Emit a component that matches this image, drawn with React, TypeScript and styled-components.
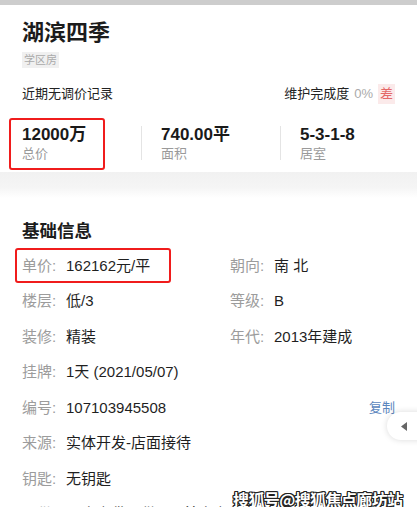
import React from 'react';
import styled, { createGlobalStyle } from 'styled-components';

const GlobalStyle = createGlobalStyle`
  html, body {
    margin: 0;
    padding: 0;
    background: #fff;
  }
  body {
    font-family: "Liberation Sans", "Noto Sans CJK SC", sans-serif;
    color: #222;
    overflow: hidden;
  }
`;

const Page = styled.div`
  position: relative;
  width: 417px;
  height: 507px;
  overflow: hidden;
  border-top: 5px solid #cdcdcd;
  box-sizing: border-box;
  background: #fff;
`;

const Header = styled.section`
  padding: 12px 22px 0 22px;
`;

const Title = styled.h1`
  margin: 0;
  font-size: 22px;
  line-height: 32px;
  font-weight: 700;
  color: #1c1c1c;
`;

const Tag = styled.span`
  display: inline-block;
  margin-top: 3px;
  padding: 0 2px;
  font-size: 11px;
  line-height: 16px;
  color: #aaa;
  background: #f0f0f0;
`;

const PriceLine = styled.div`
  display: flex;
  justify-content: space-between;
  align-items: center;
  margin-top: 16px;
  font-size: 13px;
  line-height: 20px;
  color: #222;
`;

const Completion = styled.div`
  display: flex;
  align-items: center;
  gap: 5px;
`;

const Percent = styled.span`
  color: #aaa;
`;

const Grade = styled.span`
  padding: 0 2px;
  color: #e46868;
  background: #fbeaea;
`;

const Stats = styled.div`
  display: grid;
  grid-template-columns: 119px 139px 1fr;
  margin-top: 20px;
  padding-bottom: 12px;
`;

const Stat = styled.div<{ $divider?: boolean; $boxed?: boolean }>`
  position: relative;
  padding-left: ${p => (p.$divider ? '19px' : '0')};
  border-left: ${p => (p.$divider ? '1px solid #e4e4e4' : 'none')};
  height: 34px;
  margin-top: 2px;
  &::after {
    content: '';
    display: ${p => (p.$boxed ? 'block' : 'none')};
    position: absolute;
    left: -13px;
    top: -8px;
    width: 92px;
    height: 48px;
    border: 2px solid #f01c1c;
    border-radius: 3px;
  }
`;

const StatValue = styled.div`
  font-size: 17px;
  line-height: 18px;
  font-weight: 700;
  color: #1a1a1a;
`;

const StatLabel = styled.div`
  margin-top: 1px;
  font-size: 13px;
  line-height: 18px;
  color: #9a9a9a;
`;

const Band = styled.div`
  height: 26px;
  background: linear-gradient(#f1f1f1, #f5f5f5 60%, #fff);
`;

const Info = styled.section`
  padding: 20px 22px 0 22px;
`;

const SectionTitle = styled.h2`
  margin: 0 0 4px 0;
  font-size: 17.5px;
  line-height: 26px;
  font-weight: 700;
  color: #1c1c1c;
`;

const Grid = styled.div`
  display: grid;
  grid-template-columns: 208px 1fr;
  grid-auto-rows: 35.5px;
  align-items: center;
`;

const Field = styled.div<{ $boxed?: boolean; $wide?: boolean }>`
  position: relative;
  display: flex;
  align-items: center;
  grid-column: ${p => (p.$wide ? '1 / -1' : 'auto')};
  font-size: 15px;
  line-height: 20px;
  white-space: nowrap;
  &::after {
    content: '';
    display: ${p => (p.$boxed ? 'block' : 'none')};
    position: absolute;
    left: -7px;
    top: -8px;
    width: 152px;
    height: 31px;
    border: 2px solid #f01c1c;
    border-radius: 3px;
  }
`;

const Label = styled.span`
  width: 44px;
  color: #9c9c9c;
`;

const Value = styled.span`
  color: #1f1f1f;
`;

const Copy = styled.span`
  margin-left: auto;
  font-size: 13px;
  color: #5b86bd;
`;

const Hint = styled.span`
  display: inline-block;
  width: 12px;
  height: 12px;
  margin: 0 8px 0 5px;
  border: 1px solid #bbb;
  border-radius: 50%;
`;

const SideTab = styled.div`
  position: absolute;
  right: -6px;
  top: 407px;
  width: 36px;
  height: 28px;
  border-radius: 14px 0 0 14px;
  background: #fff;
  box-shadow: 0 0 6px rgba(0, 0, 0, 0.15);
  display: flex;
  align-items: center;
  padding-left: 14px;
  box-sizing: border-box;
`;

const Watermark = styled.div`
  position: absolute;
  left: 233px;
  top: 482px;
  font-size: 16px;
  font-weight: 700;
  color: #fff;
  letter-spacing: -0.6px;
  font-family: "Noto Sans CJK SC", sans-serif;
  text-shadow:
    -1px -1px 0 #222, 1px -1px 0 #222, -1px 1px 0 #222, 1px 1px 0 #222,
    0 1px 0 #222, 0 -1px 0 #222, 1px 0 0 #222, -1px 0 0 #222;
`;

export default function App() {
  return (
    <Page>
      <GlobalStyle />
      <Header>
        <Title>湖滨四季</Title>
        <Tag>学区房</Tag>
        <PriceLine>
          <span>近期无调价记录</span>
          <Completion>
            <span>维护完成度</span>
            <Percent>0%</Percent>
            <Grade>差</Grade>
          </Completion>
        </PriceLine>
        <Stats>
          <Stat $boxed>
            <StatValue>12000万</StatValue>
            <StatLabel>总价</StatLabel>
          </Stat>
          <Stat $divider>
            <StatValue>740.00平</StatValue>
            <StatLabel>面积</StatLabel>
          </Stat>
          <Stat $divider>
            <StatValue>5-3-1-8</StatValue>
            <StatLabel>居室</StatLabel>
          </Stat>
        </Stats>
      </Header>
      <Band />
      <Info>
        <SectionTitle>基础信息</SectionTitle>
        <Grid>
          <Field $boxed>
            <Label>单价:</Label>
            <Value>162162元/平</Value>
          </Field>
          <Field>
            <Label>朝向:</Label>
            <Value>南 北</Value>
          </Field>
          <Field>
            <Label>楼层:</Label>
            <Value>低/3</Value>
          </Field>
          <Field>
            <Label>等级:</Label>
            <Value>B</Value>
          </Field>
          <Field>
            <Label>装修:</Label>
            <Value>精装</Value>
          </Field>
          <Field>
            <Label>年代:</Label>
            <Value>2013年建成</Value>
          </Field>
          <Field $wide>
            <Label>挂牌:</Label>
            <Value>1天 (2021/05/07)</Value>
          </Field>
          <Field $wide>
            <Label>编号:</Label>
            <Value>107103945508</Value>
            <Copy>复制</Copy>
          </Field>
          <Field $wide>
            <Label>来源:</Label>
            <Value>实体开发-店面接待</Value>
          </Field>
          <Field $wide>
            <Label>钥匙:</Label>
            <Value>无钥匙</Value>
          </Field>
          <Field $wide>
            <Label>月供:</Label>
            <Value>月度房贷月供</Value>
            <Hint />
            <Value>首度房贷月供</Value>
            <Hint />
          </Field>
        </Grid>
      </Info>
      <SideTab>
        <svg width="7" height="9" viewBox="0 0 7 9">
          <path d="M6 0 L0 4.5 L6 9 Z" fill="#666" />
        </svg>
      </SideTab>
      <Watermark>搜狐号@搜狐焦点廊坊站</Watermark>
    </Page>
  );
}
